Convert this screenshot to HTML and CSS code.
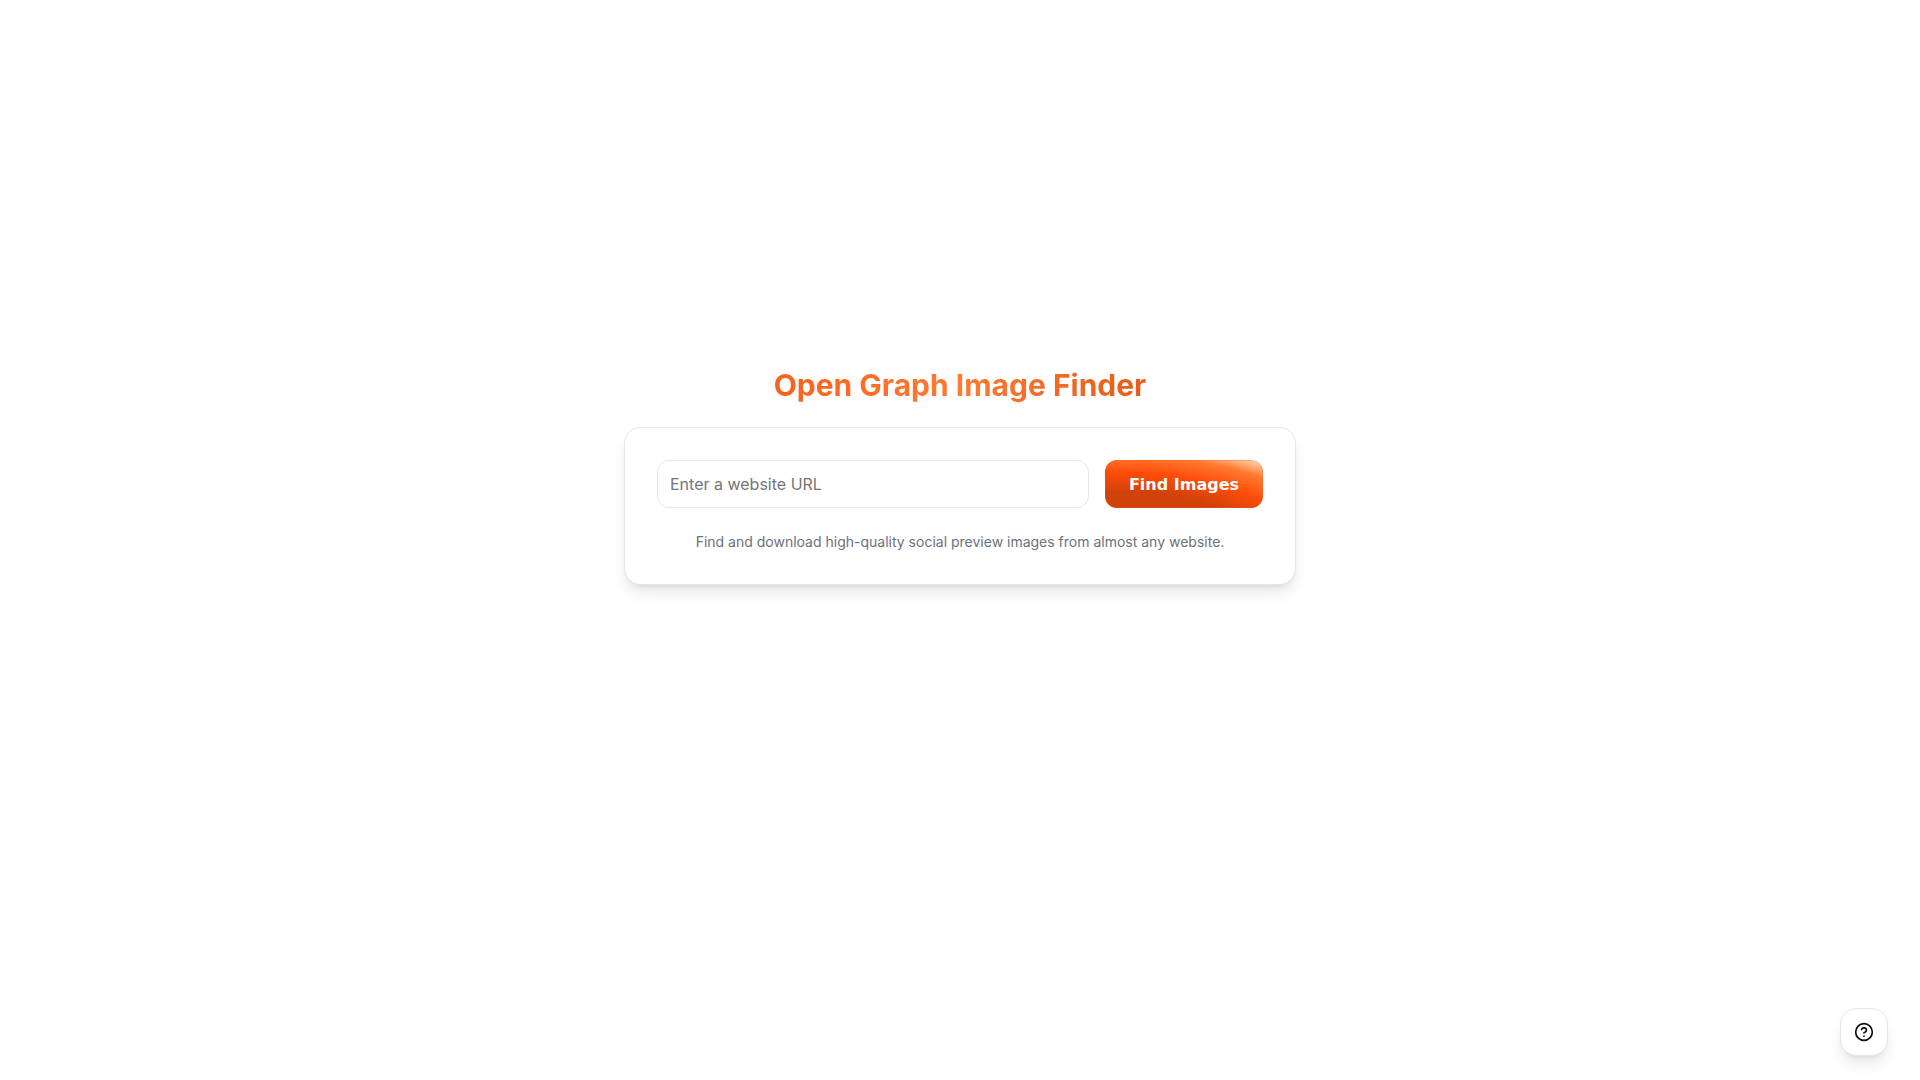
FILE: index.html
```html
<!DOCTYPE html>
<html lang="en">
<head>
<meta charset="UTF-8" />
<meta name="viewport" content="width=device-width, initial-scale=1.0" />
<title>Open Graph Image Finder</title>
<link rel="stylesheet" href="styles.css">
</head>
<body>
  <main class="page">
    <h1 class="title">Open Graph Image Finder</h1>
    <section class="card">
      <form class="search">
        <input class="url-input" type="url" placeholder="Enter a website URL" aria-label="Website URL" />
        <button class="find-button" type="submit">Find Images</button>
      </form>
      <p class="hint">Find and download high-quality social preview images from almost any website.</p>
    </section>
  </main>

  <button class="help-button" type="button" aria-label="Help">
    <svg width="20" height="20" viewBox="0 0 24 24" fill="none" stroke="currentColor" stroke-width="2" stroke-linecap="round" stroke-linejoin="round">
      <circle cx="12" cy="12" r="10" />
      <path d="M9.09 9a3 3 0 0 1 5.83 1c0 2-3 3-3 3" />
      <path d="M12 17h.01" />
    </svg>
  </button>
</body>
</html>
```

FILE: styles.css
```css
* {
  box-sizing: border-box;
}
body {
  margin: 0;
  background: #fff;
  color: #0a0a0a;
  font-family: Inter, sans-serif;
}
.page {
  display: flex;
  flex-direction: column;
  align-items: center;
  justify-content: center;
  gap: 24px;
  min-height: 100vh;
  padding: 16px 16px 144px;
}
.title {
  margin: 0;
  font-size: 30px;
  line-height: 36px;
  font-weight: 700;
  color: transparent;
  background: linear-gradient(to right, #ff5f1a, #ff7a33 50%, #e65c18);
  -webkit-background-clip: text;
  background-clip: text;
}
.card {
  width: 100%;
  max-width: 672px;
  padding: 32px;
  border: 1px solid #e5e5e5;
  border-radius: 16px;
  background: #fff;
  box-shadow: 0 10px 15px -3px rgba(0, 0, 0, 0.1), 0 4px 6px -4px rgba(0, 0, 0, 0.1);
}
.search {
  display: flex;
  gap: 16px;
}
.url-input {
  flex: 1;
  min-width: 0;
  height: 48px;
  padding: 0 12px;
  border: 1px solid #e5e5e5;
  border-radius: 12px;
  background: #fff;
  color: #0a0a0a;
  font-family: inherit;
  font-size: 16px;
}
.url-input::placeholder {
  color: #757575;
}
.find-button {
  height: 48px;
  padding: 0 24px;
  border: none;
  border-radius: 12px;
  color: #fff;
  font-family: "DejaVu Sans", sans-serif;
  font-size: 16px;
  font-weight: 600;
  background: radial-gradient(170% 250% at 8% 208%, #d04208 57%, #ff4d0a 73%, #ff7a30 87%, #ffd2b0 97%);
  box-shadow: inset 0 0 0 1px rgba(240, 90, 30, 0.3);
  cursor: pointer;
}
.hint {
  margin: 24px 0 0;
  color: #6b7280;
  font-size: 14px;
  line-height: 20px;
  text-align: center;
}
.help-button {
  position: fixed;
  right: 32px;
  bottom: 24px;
  display: flex;
  align-items: center;
  justify-content: center;
  width: 48px;
  height: 48px;
  padding: 0;
  border: 1px solid #e5e5e5;
  border-radius: 16px;
  background: #fff;
  color: #0a0a0a;
  box-shadow: 0 10px 15px -3px rgba(0, 0, 0, 0.1), 0 4px 6px -4px rgba(0, 0, 0, 0.1);
  cursor: pointer;
}
```
